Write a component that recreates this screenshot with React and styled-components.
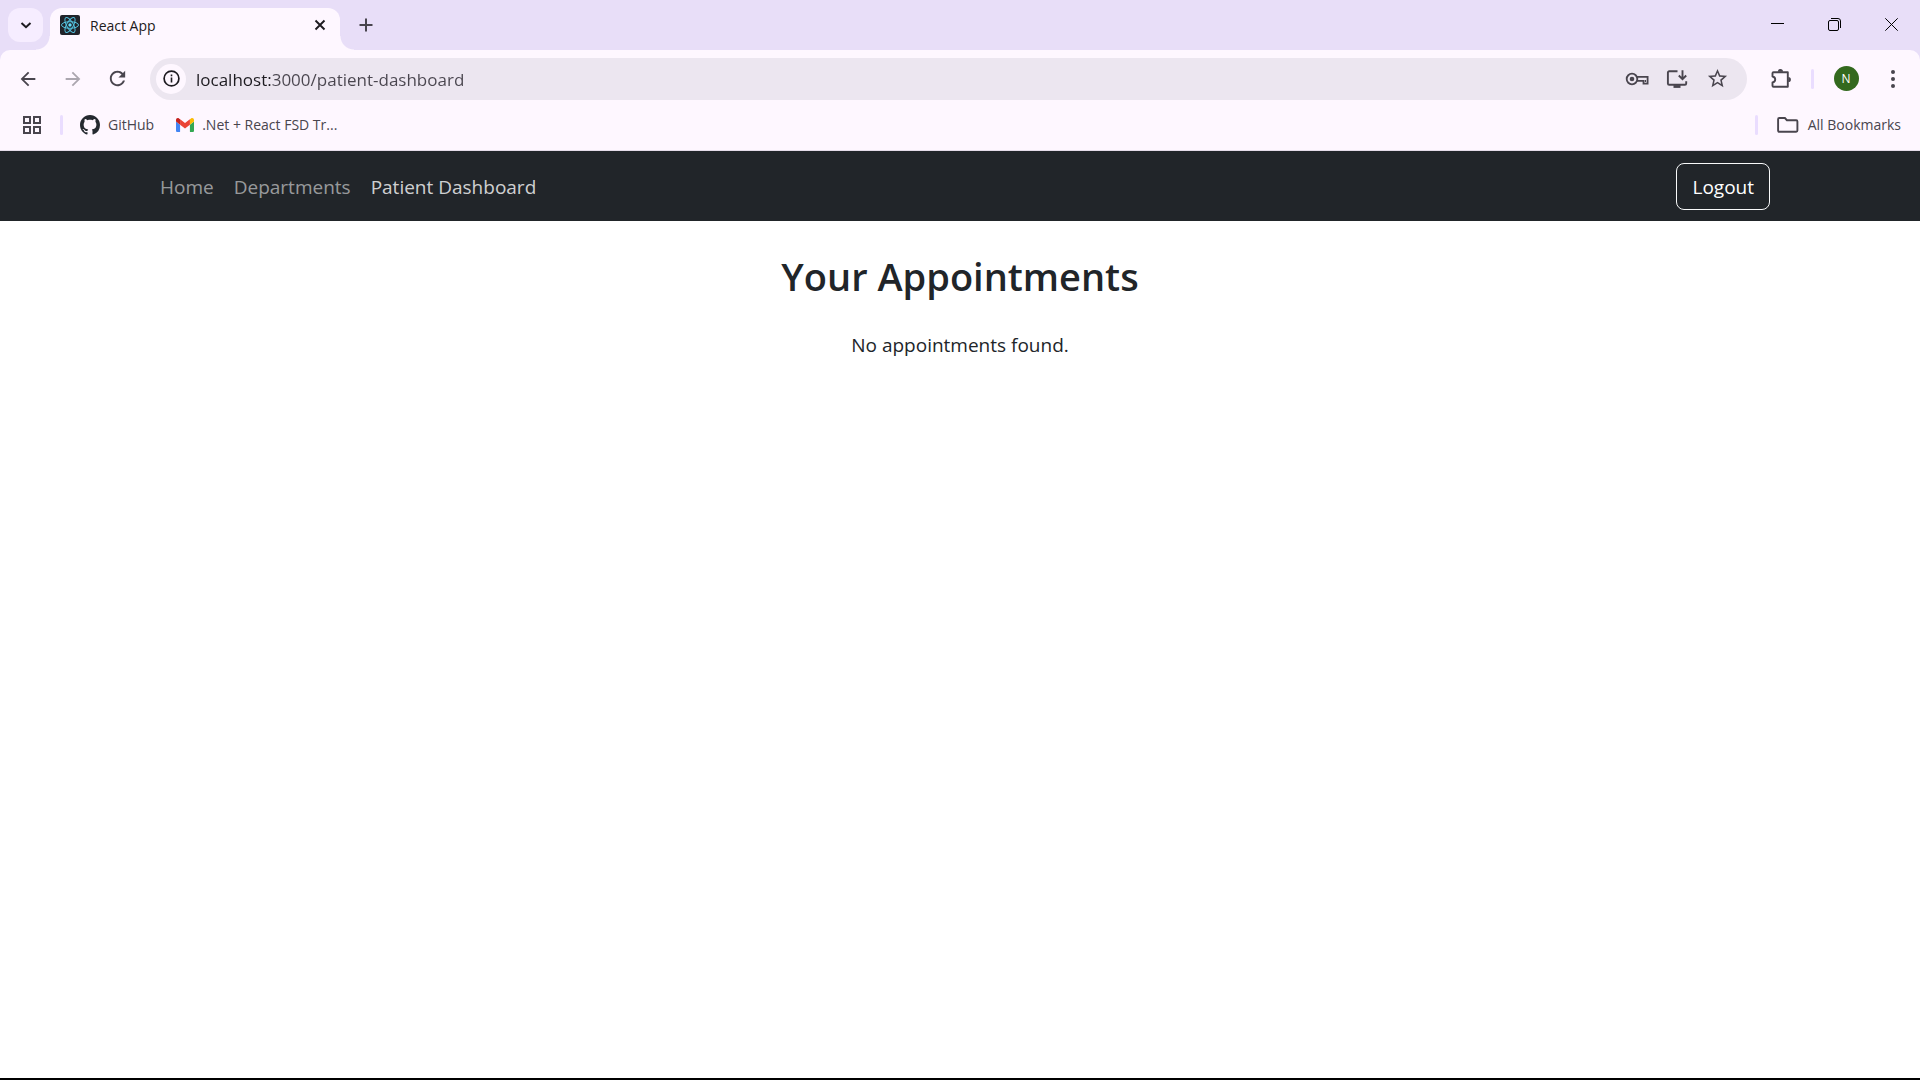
import React from "react";
import styled, { createGlobalStyle, css } from "styled-components";

const c = {
  strip: "#e8def8",
  surface: "#fef7ff",
  field: "#ece6f0",
  line: "#eaddff",
  ink: "#1d1b20",
  muted: "#49454e",
  dark: "#212529",
};

const GlobalStyle = createGlobalStyle`
  *, *::before, *::after { box-sizing: border-box; }
  body {
    margin: 0;
    background: #fff;
    font-family: "Segoe UI", "Open Sans", "Noto Sans", sans-serif;
  }
  h1, p, ul { margin: 0; padding: 0; }
  svg { display: block; flex: none; }
`;

const Shell = styled.div`
  display: flex;
  flex-direction: column;
  min-height: 100vh;
  border-bottom: 2px solid #000;
`;

const Chrome = styled.header`
  background: ${c.strip};
`;

const iconReset = css`
  display: flex;
  align-items: center;
  justify-content: center;
  flex: none;
  padding: 0;
  border: 0;
  background: transparent;
  font: inherit;
`;

const IconButton = styled.button`
  ${iconReset}
  width: ${(p) => p.$w || 40}px;
  height: 40px;
  color: ${(p) => p.$color || c.muted};
`;

const TabStrip = styled.div`
  display: flex;
  height: 50px;
  padding: 8px 0 0 8px;
`;

const TabSearch = styled.button`
  ${iconReset}
  width: 35px;
  height: 34px;
  margin-right: 7px;
  border-radius: 12px;
  background: #f6edff;
  color: ${c.ink};
`;

const Tab = styled.div`
  position: relative;
  display: flex;
  align-items: center;
  gap: 10px;
  width: 290px;
  height: 42px;
  padding: 0 7px 8px 10px;
  border-radius: 12px 12px 0 0;
  background: ${c.surface};
  &::before, &::after {
    content: "";
    position: absolute;
    bottom: 0;
    width: 14px;
    height: 14px;
  }
  &::before {
    right: 100%;
    background: radial-gradient(circle at 0 0, transparent 13px, ${c.surface} 14px);
  }
  &::after {
    left: 100%;
    background: radial-gradient(circle at 100% 0, transparent 13px, ${c.surface} 14px);
  }
`;

const TabTitle = styled.span`
  flex: 1;
  padding-top: 2px;
  font-size: 14px;
  line-height: 20px;
  color: ${c.ink};
`;

const TabClose = styled.button`
  ${iconReset}
  width: 26px;
  height: 26px;
  color: ${c.ink};
`;

const NewTab = styled.button`
  ${iconReset}
  width: 34px;
  height: 34px;
  margin-left: 9px;
  color: ${c.muted};
`;

const WindowControls = styled.div`
  display: flex;
  align-items: center;
  height: 32px;
  margin-left: auto;
`;

const WindowButton = styled.button`
  ${iconReset}
  width: 57px;
  height: 32px;
  color: #000;
`;

const Toolbar = styled.div`
  display: flex;
  align-items: center;
  height: 57px;
  padding: 0 5px;
  border-radius: 10px 10px 0 0;
  background: ${c.surface};
`;

const Omnibox = styled.div`
  display: flex;
  flex: 1;
  align-items: center;
  height: 42px;
  margin: 0 14px 0 10px;
  padding: 0 10px 0 6px;
  border-radius: 21px;
  background: ${c.field};
`;

const SiteInfo = styled.button`
  ${iconReset}
  width: 30px;
  height: 30px;
  border-radius: 50%;
  background: ${c.surface};
  color: ${c.ink};
`;

const Address = styled.input`
  flex: 1;
  min-width: 0;
  margin-left: 10px;
  padding: 2px 0 0;
  border: 0;
  outline: 0;
  font: inherit;
  font-size: 17px;
  line-height: 24px;
  color: transparent;
  background: linear-gradient(90deg, ${c.ink} 76px, ${c.muted} 76px);
  background-clip: text;
  -webkit-background-clip: text;
`;

const Divider = styled.span`
  flex: none;
  width: 3px;
  height: 20px;
  border-radius: 2px;
  background: ${c.line};
`;

const Avatar = styled.span`
  display: flex;
  align-items: center;
  justify-content: center;
  width: 25px;
  height: 25px;
  border-radius: 50%;
  background: #33691e;
  color: #fff;
  font-size: 12px;
  line-height: 16px;
`;

const Profile = styled.div`
  display: flex;
  align-items: center;
  padding-left: 10px;
`;

const Bookmarks = styled.nav`
  display: flex;
  align-items: center;
  height: 44px;
  padding: 0 19px 8px 12px;
  border-bottom: 1px solid #e4dce8;
  background: ${c.surface};
`;

const BookmarkGroup = styled.div`
  display: flex;
  align-items: center;
  gap: 22px;
  margin-left: 17px;
`;

const Bookmark = styled.a`
  display: flex;
  align-items: center;
  gap: 8px;
  color: ${c.muted};
  font-size: 14px;
  line-height: 20px;
  text-decoration: none;
`;

const AllBookmarks = styled.button`
  ${iconReset}
  gap: 9px;
  margin-left: 19px;
  color: ${c.muted};
  font-size: 14px;
  line-height: 20px;
`;

const Spacer = styled.span`
  flex: 1;
`;

const Gap = styled.span`
  flex: none;
  width: 8px;
`;

const SiteNav = styled.nav`
  padding: 10px 0;
  background: ${c.dark};
`;

const Container = styled.div`
  display: flex;
  align-items: center;
  justify-content: space-between;
  width: 100%;
  max-width: 1650px;
  height: 50px;
  margin: 0 auto;
  padding: 0 15px;
`;

const NavList = styled.ul`
  display: flex;
  list-style: none;
`;

const NavLink = styled.a`
  display: block;
  padding: 10px 10px 8px;
  font-size: 19px;
  line-height: 30px;
  text-decoration: none;
  color: ${(p) => (p.$active ? "rgba(255,255,255,.8)" : "rgba(255,255,255,.55)")};
`;

const Logout = styled.button`
  height: 47px;
  padding: 2px 15px 0;
  border: 1px solid #f8f9fa;
  border-radius: 8px;
  background: transparent;
  color: #fff;
  font: inherit;
  font-size: 19px;
  line-height: 30px;
`;

const Main = styled.main`
  flex: 1;
  padding: 31px 15px;
  color: ${c.dark};
  text-align: center;
`;

const Title = styled.h1`
  font-size: 38px;
  font-weight: 560;
  line-height: 48px;
`;

const Message = styled.p`
  margin-top: 30px;
  font-size: 19px;
  line-height: 30px;
`;

const Glyph = ({ size = 24, box = 24, children, ...rest }) => (
  <svg width={size} height={size} viewBox={`0 0 ${box} ${box}`} fill="currentColor" aria-hidden="true" {...rest}>
    {children}
  </svg>
);

const ReactLogo = () => (
  <Glyph size={20} box={20}>
    <rect width="20" height="20" rx="2" fill="#20232a" />
    <g fill="none" stroke="#53c1de" strokeWidth="1">
      <ellipse cx="10" cy="10" rx="8.5" ry="3.3" />
      <ellipse cx="10" cy="10" rx="8.5" ry="3.3" transform="rotate(60 10 10)" />
      <ellipse cx="10" cy="10" rx="8.5" ry="3.3" transform="rotate(120 10 10)" />
    </g>
    <circle cx="10" cy="10" r="1.7" fill="#61dafb" />
  </Glyph>
);

const GitHubLogo = () => (
  <Glyph size={20} box={16} color="#24292f">
    <path d="M8 0C3.58 0 0 3.58 0 8c0 3.54 2.29 6.53 5.47 7.59.4.07.55-.17.55-.38 0-.19-.01-.82-.01-1.49-2.01.37-2.53-.49-2.69-.94-.09-.23-.48-.94-.82-1.13-.28-.15-.68-.52-.01-.53.63-.01 1.08.58 1.23.82.72 1.21 1.87.87 2.33.66.07-.52.28-.87.51-1.07-1.78-.2-3.64-.89-3.64-3.95 0-.87.31-1.59.82-2.15-.08-.2-.36-1.02.08-2.12 0 0 .67-.21 2.2.82.64-.18 1.32-.27 2-.27s1.36.09 2 .27c1.53-1.04 2.2-.82 2.2-.82.44 1.1.16 1.92.08 2.12.51.56.82 1.27.82 2.15 0 3.07-1.87 3.75-3.65 3.95.29.25.54.73.54 1.48 0 1.07-.01 1.93-.01 2.2 0 .21.15.46.55.38A8.01 8.01 0 0 0 16 8c0-4.42-3.58-8-8-8z" />
  </Glyph>
);

const GmailLogo = () => (
  <svg width="18" height="14" viewBox="52 42 88 66" preserveAspectRatio="none" aria-hidden="true">
    <path fill="#4285f4" d="M58 108h14V74L52 59v43c0 3.32 2.69 6 6 6" />
    <path fill="#34a853" d="M120 108h14c3.32 0 6-2.69 6-6V59l-20 15" />
    <path fill="#fbbc04" d="M120 48v26l20-15v-8c0-7.42-8.47-11.65-14.4-7.2" />
    <path fill="#ea4335" d="M72 74V48l24 18 24-18v26L96 92" />
    <path fill="#c5221f" d="M52 51v8l20 15V48l-5.6-4.2c-5.94-4.45-14.4-.22-14.4 7.2" />
  </svg>
);

export default function App() {
  return (
    <Shell>
      <GlobalStyle />
      <Chrome>
        <TabStrip>
          <TabSearch aria-label="Search tabs">
            <Glyph size={12} box={12} fill="none" stroke="currentColor" strokeWidth="2">
              <path d="M1.5 4 6 8.2 10.5 4" />
            </Glyph>
          </TabSearch>
          <Tab>
            <ReactLogo />
            <TabTitle>React App</TabTitle>
            <TabClose aria-label="Close tab">
              <Glyph size={12} box={12} fill="none" stroke="currentColor" strokeWidth="1.9">
                <path d="M1.5 1.5l9 9M10.5 1.5l-9 9" />
              </Glyph>
            </TabClose>
          </Tab>
          <NewTab aria-label="New tab">
            <Glyph size={14} box={14} fill="none" stroke="currentColor" strokeWidth="2">
              <path d="M7 .5v13M.5 7h13" />
            </Glyph>
          </NewTab>
          <WindowControls>
            <WindowButton aria-label="Minimize">
              <Glyph size={13} box={13}>
                <path d="M0 5h13v1H0z" />
              </Glyph>
            </WindowButton>
            <WindowButton aria-label="Restore">
              <Glyph size={13} box={13} fill="none" stroke="currentColor">
                <rect x=".5" y="2.5" width="10" height="10" rx="1.5" />
                <path d="M3 .5h7a2.5 2.5 0 0 1 2.5 2.5v7" />
              </Glyph>
            </WindowButton>
            <WindowButton aria-label="Close window">
              <Glyph size={13} box={13} fill="none" stroke="currentColor">
                <path d="M.3.3l12.4 12.4M12.7.3.3 12.7" />
              </Glyph>
            </WindowButton>
          </WindowControls>
        </TabStrip>

        <Toolbar>
          <IconButton $w={45} aria-label="Back">
            <Glyph size={22}>
              <path d="M20 11H7.83l5.59-5.59L12 4l-8 8 8 8 1.41-1.41L7.83 13H20z" />
            </Glyph>
          </IconButton>
          <IconButton $w={45} $color="#aba6af" aria-label="Forward">
            <Glyph size={22}>
              <path d="M4 13h12.17l-5.59 5.59L12 20l8-8-8-8-1.41 1.41L16.17 11H4z" />
            </Glyph>
          </IconButton>
          <IconButton $w={45} aria-label="Reload">
            <Glyph size={23}>
              <path d="M17.65 6.35C16.2 4.9 14.21 4 12 4c-4.42 0-7.99 3.58-7.99 8s3.57 8 7.99 8c3.73 0 6.84-2.55 7.73-6h-2.08c-.82 2.33-3.04 4-5.65 4-3.31 0-6-2.69-6-6s2.69-6 6-6c1.66 0 3.14.69 4.22 1.78L13 11h7V4z" />
            </Glyph>
          </IconButton>
          <Omnibox>
            <SiteInfo aria-label="Site information">
              <Glyph size={17} box={17}>
                <circle cx="8.5" cy="8.5" r="7.4" fill="none" stroke="currentColor" strokeWidth="1.7" />
                <path d="M7.7 7.5h1.6v5H7.7zM7.7 4.5h1.6v1.7H7.7z" />
              </Glyph>
            </SiteInfo>
            <Address aria-label="Address" type="text" spellCheck="false" defaultValue="localhost:3000/patient-dashboard" />
            <IconButton aria-label="Passwords">
              <Glyph size={24} fill="none" stroke="currentColor" strokeWidth="1.8">
                <circle cx="7" cy="12" r="5.3" />
                <circle cx="7" cy="12" r="2.3" fill="currentColor" stroke="none" />
                <path d="M11.9 9.8H22.6v6.9h-4.1v-2.8h-6.6" />
                <path d="M20.4 13v2" strokeWidth="1.3" />
              </Glyph>
            </IconButton>
            <IconButton aria-label="Install app">
              <Glyph size={22} box={22} fill="none" stroke="currentColor" strokeWidth="1.9">
                <path d="M11.5 3.2H3.2a1.3 1.3 0 0 0-1.3 1.3v10.9c0 .7.6 1.3 1.3 1.3h15.7c.7 0 1.3-.6 1.3-1.3v-2.2" />
                <path d="M16.5 2.2v8.500M12.800 7.500l3.700 3.700 3.700-3.700" />
                <path d="M7.5 18.500h7" strokeWidth="2.800" />
              </Glyph>
            </IconButton>
            <IconButton aria-label="Bookmark this tab">
              <Glyph size={23}>
                <path d="M22 9.24l-7.19-.62L12 2 9.19 8.63 2 9.24l5.46 4.73L5.82 21 12 17.27 18.18 21l-1.63-7.03zM12 15.4l-3.76 2.27 1-4.28-3.32-2.88 4.38-.38L12 6.1l1.71 4.04 4.38.38-3.32 2.88 1 4.28z" />
              </Glyph>
            </IconButton>
          </Omnibox>
          <IconButton aria-label="Extensions">
            <Glyph size={22} box={22} fill="none" stroke="currentColor" strokeWidth="1.9">
              <path d="M3.5 4.2h14.3v14.5H3.5c-.7 0-1-.3-1-1v-3.3c3.6-.7 3.6-5.2 0-5.9V5.2c0-.7.3-1 1-1z" strokeLinejoin="round" />
              <path d="M7.8 3.7a2.6 2.6 0 0 1 5.2 0zM18.3 8.9a2.6 2.6 0 0 1 0 5.2z" fill="currentColor" stroke="none" />
            </Glyph>
          </IconButton>
          <Profile>
            <Divider />
            <Gap />
            <IconButton $w={48} aria-label="Profile">
              <Avatar>N</Avatar>
            </IconButton>
          </Profile>
          <IconButton $w={45} aria-label="Menu">
            <Glyph size={18} box={18}>
              <circle cx="9" cy="2" r="2" />
              <circle cx="9" cy="9" r="2" />
              <circle cx="9" cy="16" r="2" />
            </Glyph>
          </IconButton>
        </Toolbar>

        <Bookmarks aria-label="Bookmarks">
          <IconButton aria-label="Apps">
            <Glyph size={18} box={18} fill="none" stroke="currentColor" strokeWidth="2">
              <path d="M1 1h6v6H1zM11 1h6v6h-6zM1 11h6v6H1zM11 11h6v6h-6z" />
            </Glyph>
          </IconButton>
          <Gap />
          <Divider />
          <BookmarkGroup>
            <Bookmark href="#github">
              <GitHubLogo />
              GitHub
            </Bookmark>
            <Bookmark href="#training">
              <GmailLogo />
              .Net + React FSD Tr...
            </Bookmark>
          </BookmarkGroup>
          <Spacer />
          <Divider />
          <AllBookmarks>
            <svg width="22" height="16" viewBox="0 0 22 16" fill="none" stroke="currentColor" strokeWidth="1.9" aria-hidden="true">
              <path d="M2.3 1h5.6l2 2.2h9.3c.7 0 1.2.5 1.2 1.2v9.2c0 .7-.5 1.2-1.2 1.2H2.3c-.7 0-1.2-.5-1.2-1.2V2.2C1.1 1.5 1.6 1 2.3 1z" />
            </svg>
            All Bookmarks
          </AllBookmarks>
        </Bookmarks>
      </Chrome>

      <SiteNav aria-label="Site">
        <Container>
          <NavList>
            <li><NavLink href="#home">Home</NavLink></li>
            <li><NavLink href="#departments">Departments</NavLink></li>
            <li><NavLink href="#patient-dashboard" $active>Patient Dashboard</NavLink></li>
          </NavList>
          <Logout>Logout</Logout>
        </Container>
      </SiteNav>

      <Main>
        <Title>Your Appointments</Title>
        <Message>No appointments found.</Message>
      </Main>
    </Shell>
  );
}
